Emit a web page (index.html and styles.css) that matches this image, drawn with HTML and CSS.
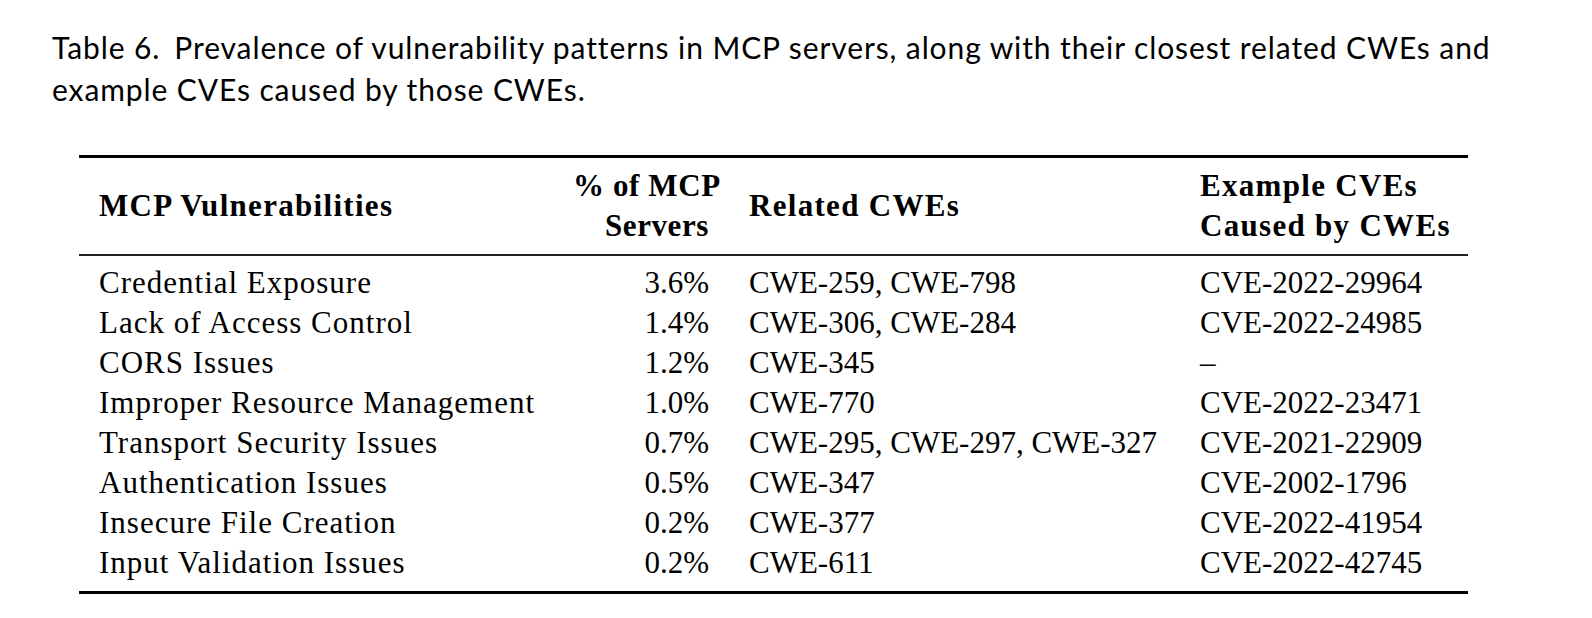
FILE: index.html
```html
<!DOCTYPE html>
<html lang="en">
<head>
<meta charset="utf-8">
<title>Table 6</title>
<link rel="stylesheet" href="styles.css">
</head>
<body>
<main class="page">
  <p class="caption"><span class="label">Table 6.</span>Prevalence of vulnerability patterns in MCP servers, along with their closest related CWEs and<br>example CVEs caused by those CWEs.</p>
  <table class="vuln">
    <colgroup>
      <col class="c1"><col class="c2"><col class="c3"><col class="c4">
    </colgroup>
    <thead>
      <tr>
        <th>MCP Vulnerabilities</th>
        <th class="num">% of MCP<br>Servers</th>
        <th>Related CWEs</th>
        <th>Example CVEs<br>Caused by CWEs</th>
      </tr>
    </thead>
    <tbody>
      <tr><td>Credential Exposure</td><td class="num">3.6%</td><td class="code">CWE-259, CWE-798</td><td class="code">CVE-2022-29964</td></tr>
      <tr><td>Lack of Access Control</td><td class="num">1.4%</td><td class="code">CWE-306, CWE-284</td><td class="code">CVE-2022-24985</td></tr>
      <tr><td>CORS Issues</td><td class="num">1.2%</td><td class="code">CWE-345</td><td class="code">–</td></tr>
      <tr><td>Improper Resource Management</td><td class="num">1.0%</td><td class="code">CWE-770</td><td class="code">CVE-2022-23471</td></tr>
      <tr><td>Transport Security Issues</td><td class="num">0.7%</td><td class="code">CWE-295, CWE-297, CWE-327</td><td class="code">CVE-2021-22909</td></tr>
      <tr><td>Authentication Issues</td><td class="num">0.5%</td><td class="code">CWE-347</td><td class="code">CVE-2002-1796</td></tr>
      <tr><td>Insecure File Creation</td><td class="num">0.2%</td><td class="code">CWE-377</td><td class="code">CVE-2022-41954</td></tr>
      <tr><td>Input Validation Issues</td><td class="num">0.2%</td><td class="code">CWE-611</td><td class="code">CVE-2022-42745</td></tr>
    </tbody>
  </table>
</main>
</body>
</html>
```

FILE: styles.css
```css
html, body {
  margin: 0;
  padding: 0;
  background: #ffffff;
  color: #000000;
}

.page {
  padding: 26px 0 0 52px;
}

.caption {
  margin: 0;
  font-family: "Lato", "Liberation Sans", sans-serif;
  font-size: 30px;
  line-height: 42px;
  letter-spacing: 0.9px;
  white-space: nowrap;
  color: #000;
}

.caption .label {
  margin-right: 14px;
}

.vuln {
  margin: 45px 0 0 27px;
  width: 1389px;
  table-layout: fixed;
  border-collapse: collapse;
  font-family: "Liberation Serif", "Times New Roman", serif;
  font-size: 31px;
  letter-spacing: 1px;
  line-height: 40px;
  border-top: 3px solid #000;
  border-bottom: 3px solid #000;
}

.vuln col.c1 { width: 474px; }
.vuln col.c2 { width: 176px; }
.vuln col.c3 { width: 451px; }
.vuln col.c4 { width: 288px; }

.vuln th,
.vuln td {
  padding: 0 20px;
  text-align: left;
  vertical-align: middle;
  white-space: nowrap;
}

.vuln th {
  font-weight: bold;
  letter-spacing: 1.3px;
  padding-top: 8px;
  padding-bottom: 8px;
}

.vuln th.num {
  letter-spacing: 0.6px;
}

.vuln thead tr {
  border-bottom: 2px solid #222;
}

.vuln tbody tr:first-child td {
  padding-top: 7px;
}

.vuln tbody tr:last-child td {
  padding-bottom: 8px;
}

.vuln .num {
  text-align: right;
}

.vuln td.num,
.vuln td.code {
  letter-spacing: 0;
}
```
